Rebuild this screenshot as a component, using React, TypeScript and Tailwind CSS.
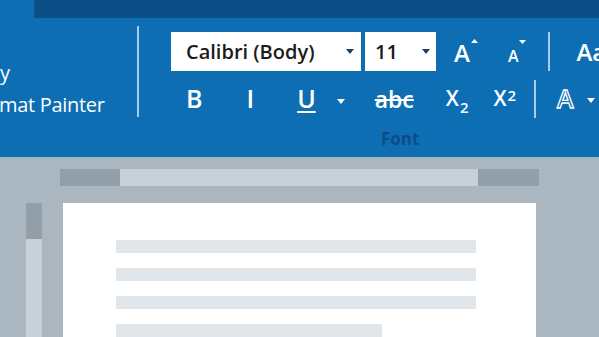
import type { ReactNode } from "react";

function Caret({ className = "" }: { className?: string }) {
  return (
    <svg width="8" height="5" viewBox="0 0 8 5" className={`shrink-0 ${className}`}>
      <polygon points="0,0 8,0 4,5" fill="currentColor" />
    </svg>
  );
}

function Sep({ className = "" }: { className?: string }) {
  return <div className={`shrink-0 w-[2px] bg-[#a8cdea] ${className}`} />;
}

function Tool({ children, className = "" }: { children: ReactNode; className?: string }) {
  return <div className={`shrink-0 flex items-center text-white font-semibold ${className}`}>{children}</div>;
}

export default function App() {
  return (
    <div className="w-[599px] h-[337px] overflow-hidden bg-[#abb7c0] font-['Open_Sans',sans-serif]">
      {/* ribbon */}
      <div className="h-[157px] bg-[#0d6eb4] flex flex-col">
        <div className="h-[18px] pl-[34px] flex">
          <div className="flex-1 bg-[#0b4f86]" />
        </div>

        <div className="flex flex-1">
          {/* clipboard group (cut off) */}
          <div className="shrink-0 w-[137px] pt-[39px] text-white text-[20px] font-medium leading-[32px] whitespace-nowrap">
            <div>y</div>
            <div className="-ml-px tracking-[-0.3px]">mat Painter</div>
          </div>
          <Sep className="mt-[8px] h-[91px]" />

          {/* font group */}
          <div className="shrink-0 ml-[32px] flex flex-col">
            <div className="mt-[14px] h-[39px] flex items-center whitespace-nowrap">
              <div className="shrink-0 w-[190px] h-full bg-white flex items-center justify-between pl-[15px] pr-[7px]">
                <span className="text-[20px] font-semibold text-[#1b1b1b]">Calibri (Body)</span>
                <Caret className="text-[#1d3f63]" />
              </div>
              <div className="shrink-0 ml-[4px] w-[71px] h-full bg-white flex items-center justify-between pl-[10px] pr-[6px]">
                <span className="text-[20px] font-semibold text-[#1b1b1b]">11</span>
                <Caret className="text-[#1d3f63]" />
              </div>
              <Tool className="ml-[18px] items-start">
                <span className="text-[24px] leading-none mt-[2px]">A</span>
                <svg width="7" height="4" viewBox="0 0 7 4" className="ml-[1px]">
                  <polygon points="0,4 7,4 3.5,0" fill="white" />
                </svg>
              </Tool>
              <Tool className="ml-[30px] items-start">
                <span className="text-[16px] leading-none mt-[8px]">A</span>
                <svg width="7" height="4" viewBox="0 0 7 4" className="ml-[1px]">
                  <polygon points="0,0 7,0 3.5,4" fill="white" />
                </svg>
              </Tool>
              <Sep className="ml-[22px] h-[39px]" />
              <Tool className="ml-[26px]">
                <span className="text-[24px]">Aa</span>
              </Tool>
            </div>

            <div className="mt-[9px] h-[38px] flex items-center whitespace-nowrap">
              <Tool className="ml-[15px] text-[25px]">B</Tool>
              <Tool className="ml-[44px] text-[25px]">I</Tool>
              <Tool className="ml-[43px] text-[25px] underline decoration-2 underline-offset-[3px]">U</Tool>
              <Caret className="ml-[21px] mt-[4px] text-white" />
              <Tool className="ml-[30px] text-[23px] line-through decoration-2">abc</Tool>
              <Tool className="ml-[32px] text-[21px]">
                <span>X</span>
                <span className="text-[15px] mt-[16px] ml-px">2</span>
              </Tool>
              <Tool className="ml-[25px] text-[21px]">
                <span>X</span>
                <span className="text-[15px] -mt-[8px] ml-px">2</span>
              </Tool>
              <Sep className="ml-[18px] h-[38px]" />
              <Tool className="ml-[21px] text-[25px]">
                <span className="text-transparent [-webkit-text-stroke:1.3px_white]">A</span>
              </Tool>
              <Caret className="ml-[13px] mt-[2px] text-white" />
            </div>

            <div className="mt-[8px] ml-[210px] text-[17px] font-bold text-[#0b4e85]">Font</div>
          </div>
        </div>
      </div>

      {/* document area */}
      <div className="h-[180px] flex flex-col">
        <div className="mt-[12px] ml-[60px] h-[17px] flex">
          <div className="w-[60px] bg-[#939fa8]" />
          <div className="w-[358px] bg-[#c6d1d8]" />
          <div className="w-[61px] bg-[#939fa8]" />
        </div>
        <div className="mt-[17px] flex flex-1">
          <div className="ml-[26px] w-[16px] flex flex-col">
            <div className="h-[36px] bg-[#939fa8]" />
            <div className="flex-1 bg-[#c6d1d8]" />
          </div>
          <div className="ml-[21px] w-[473px] bg-white pl-[53px] pt-[37px] flex flex-col gap-[15px]">
            <div className="w-[360px] h-[13px] bg-[#e1e6eb]" />
            <div className="w-[360px] h-[13px] bg-[#e1e6eb]" />
            <div className="w-[360px] h-[13px] bg-[#e1e6eb]" />
            <div className="w-[266px] h-[13px] bg-[#e1e6eb]" />
          </div>
        </div>
      </div>
    </div>
  );
}
